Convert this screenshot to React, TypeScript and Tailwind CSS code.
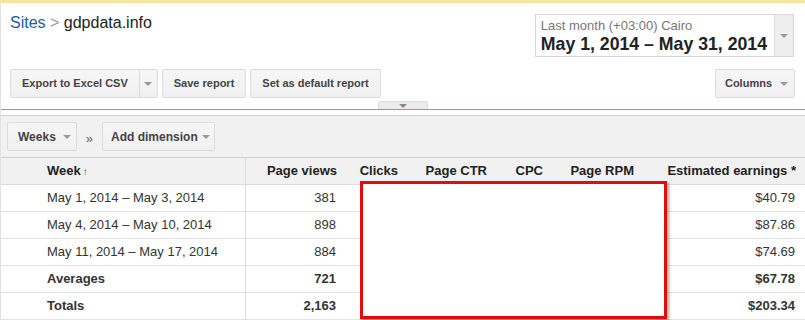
const rows = [
  { week: "May 1, 2014 – May 3, 2014", views: "381", earnings: "$40.79" },
  { week: "May 4, 2014 – May 10, 2014", views: "898", earnings: "$87.86" },
  { week: "May 11, 2014 – May 17, 2014", views: "884", earnings: "$74.69" },
  { week: "Averages", views: "721", earnings: "$67.78", bold: true },
  { week: "Totals", views: "2,163", earnings: "$203.34", bold: true },
];

const cols = "grid grid-cols-[245px_95px_60px_90px_56px_91px_1fr]";

function Caret({ color = "#888" }: { color?: string }) {
  return (
    <span
      className="inline-block w-0 h-0 border-x-[4px] border-x-transparent border-t-[4px]"
      style={{ borderTopColor: color }}
    />
  );
}

// padding goes in className so nothing fights over it
function Btn({ children, className = "px-[11px]" }: { children: React.ReactNode; className?: string }) {
  return (
    <div
      className={`h-[29px] flex items-center bg-gradient-to-b from-[#f6f6f6] to-[#f0f0f0] border border-[#dcdcdc] rounded-[2px] font-bold text-[#444] ${className}`}
    >
      {children}
    </div>
  );
}

export default function App() {
  return (
    <div className="w-[805px] h-[320px] overflow-hidden relative bg-white font-['Liberation_Sans',Arial,sans-serif]">
      <div className="h-[3px] bg-[#f7e4a4]" />

      <div className="border-l border-[#e2e2e2]">
        {/* title + date range */}
        <div className="flex justify-between pl-[9px] pr-[11px]">
          <div className="pt-[10px] text-[16px] leading-[20px]">
            <span className="text-[#1f5b9e]">Sites</span>
            <span className="text-[#999]"> &gt; </span>
            <span className="text-[#222]">gdpdata.info</span>
          </div>
          <div className="mt-[11px] flex h-[43px] border border-[#d6d6d6] bg-white">
            <div className="pl-[5px] pr-[7px] pt-[3px]">
              <div className="text-[13px] leading-[16px] text-[#777]">Last month (+03:00) Cairo</div>
              <div className="text-[17.7px] leading-[21px] font-bold text-[#222]">
                May 1, 2014 – May 31, 2014
              </div>
            </div>
            <div className="w-[19px] bg-[#eeeeee] border-l border-[#dcdcdc] flex items-center justify-center">
              <Caret color="#999" />
            </div>
          </div>
        </div>

        {/* report buttons */}
        <div className="flex justify-between pl-[9px] pr-[10px] mt-[12px] text-[11px]">
          <div className="flex gap-[4px]">
            <div className="flex">
              <Btn className="px-[11px] rounded-r-none">Export to Excel CSV</Btn>
              <div className="h-[29px] w-[18px] flex items-center justify-center bg-gradient-to-b from-[#f6f6f6] to-[#f0f0f0] border border-l-0 border-[#dcdcdc] rounded-r-[2px]">
                <Caret color="#999" />
              </div>
            </div>
            <Btn>Save report</Btn>
            <Btn>Set as default report</Btn>
          </div>
          <Btn className="gap-[8px] pl-[9px] pr-[6px]">
            Columns <Caret color="#999" />
          </Btn>
        </div>

        {/* collapse tab */}
        <div className="h-[11px] flex justify-center items-end">
          <div className="w-[50px] h-[8px] bg-[#ebebeb] border border-b-0 border-[#dedede] rounded-t-[3px] flex items-center justify-center">
            <Caret color="#888" />
          </div>
        </div>
        <div className="h-[1px] bg-[#7d9bcd]" />
        <div className="h-[6px] bg-white border-b border-[#d0d0d0]" />

        {/* dimension toolbar */}
        <div className="h-[42px] bg-[#f1f1f1] border-b border-[#cfcfcf] flex items-center pl-[6px] text-[12px]">
          <Btn className="gap-[7px] pl-[10px] pr-[5px]">
            Weeks <Caret color="#999" />
          </Btn>
          <span className="ml-[9px] mr-[9px] text-[13px] text-[#666] mt-[4px]">»</span>
          <Btn className="gap-[4px] pl-[8px] pr-[4px]">
            Add dimension <Caret color="#999" />
          </Btn>
        </div>

        {/* table */}
        <div className={`${cols} h-[27px] bg-[#f1f1f1] border-b border-[#dcdcdc] text-[13px] font-bold text-[#222] items-stretch`}>
          <div className="pl-[46px] flex items-center border-r border-[#dcdcdc]">
            Week<span className="ml-[2px] text-[10px] text-[#444]">↑</span>
          </div>
          <div className="flex items-center justify-end pr-[4px]">Page views</div>
          <div className="flex items-center justify-end pr-[3px]">Clicks</div>
          <div className="flex items-center justify-end pr-[4px]">Page CTR</div>
          <div className="flex items-center justify-end pr-[4px]">CPC</div>
          <div className="flex items-center justify-end pr-[4px]">Page RPM</div>
          <div className="flex items-center justify-end pr-[9px]">Estimated earnings *</div>
        </div>

        {rows.map((r, i) => (
          <div
            key={i}
            className={`${cols} h-[27px] border-b border-[#e3e3e3] text-[13px] text-[#333] ${r.bold ? "font-bold text-[#222]" : ""}`}
          >
            <div className="pl-[46px] flex items-center border-r border-[#dcdcdc]">{r.week}</div>
            <div className="flex items-center justify-end pr-[5px]">{r.views}</div>
            <div />
            <div />
            <div />
            <div />
            <div className="flex items-center justify-end pr-[10px]">{r.earnings}</div>
          </div>
        ))}
      </div>

      {/* highlight box */}
      <div className="absolute left-[360px] top-[181px] w-[307px] h-[138px] border-[3px] border-[#e00d0d] bg-white shadow-[2px_2px_3px_rgba(0,0,0,0.35)]" />
    </div>
  );
}
